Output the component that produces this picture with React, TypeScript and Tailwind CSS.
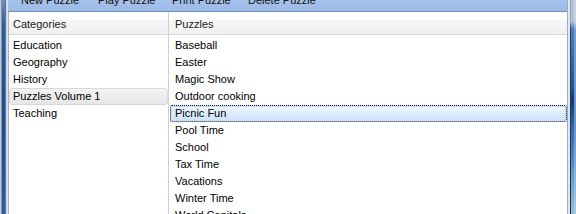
const categories = ["Education", "Geography", "History", "Puzzles Volume 1", "Teaching"];

const puzzles = [
  "Baseball",
  "Easter",
  "Magic Show",
  "Outdoor cooking",
  "Picnic Fun",
  "Pool Time",
  "School",
  "Tax Time",
  "Vacations",
  "Winter Time",
  "World Capitals",
];

const toolbarItems = [
  { label: "New Puzzle", width: "w-[77px]" },
  { label: "Play Puzzle", width: "w-[74px]" },
  { label: "Print Puzzle", width: "w-[76px]" },
  { label: "Delete Puzzle", width: "w-[90px]" },
];

function LeftFrame() {
  return (
    <div className="flex h-full w-[8px] shrink-0">
      <div className="w-px bg-[#c3ccd8]" />
      <div className="w-px bg-[#7d92ad]" />
      <div className="w-[3px] bg-[linear-gradient(to_bottom,#6d8fbd_0%,#2c5c9a_12%,#1f4d8c_60%,#2a5f9c_100%)]" />
      <div className="w-px bg-[#5b7ba3]" />
      <div className="w-px bg-[#c8d2de]" />
      <div className="w-px bg-[#dfe5ec]" />
    </div>
  );
}

function RightFrame() {
  return (
    <div className="flex h-full w-[9px] shrink-0">
      <div className="w-px bg-[#a2acb8]" />
      <div className="w-[2px] bg-[#e2e7ed]" />
      <div className="w-px bg-[linear-gradient(to_bottom,#8ea3bd_0%,#8ea3bd_10%,#143c78_14%,#0c2f66_100%)]" />
      <div className="w-[3px] bg-[linear-gradient(to_bottom,#b3c4d9_0%,#b3c4d9_10%,#4f84bf_13%,#3a6eab_25%,#1f4f92_42%,#0d3777_46%,#2a68ac_58%,#3d84c0_72%,#6ea9cc_86%,#92c2d5_100%)]" />
      <div className="w-[2px] bg-[linear-gradient(to_bottom,#c9d3df_0%,#c9d3df_10%,#7b9cc4_14%,#6e94be_60%,#a9cbd8_100%)]" />
    </div>
  );
}

function ColumnHeader({ label, indent }: { label: string; indent: string }) {
  return (
    <div
      className={`h-[19px] border-b border-[#d5d7da] bg-[linear-gradient(to_bottom,#ffffff_0%,#ffffff_18%,#f5f6f7_24%,#eff0f2_100%)] ${indent} leading-[17px] text-[#1b1b1b]`}
    >
      {label}
    </div>
  );
}

export default function App() {
  return (
    <div className="flex h-[214px] w-[576px] overflow-hidden bg-white font-['Liberation_Sans',Arial,sans-serif] text-[11px] text-black">
      <LeftFrame />

      <div className="flex min-w-0 flex-1 flex-col">
        <div className="h-[12px] shrink-0 overflow-hidden border-b border-[#6f8fbf] bg-[linear-gradient(to_bottom,#a6c1ea_0%,#9dbbe7_100%)]">
          <div className="-mt-[5px] flex pl-[13px] leading-[11px] text-[#111]">
            {toolbarItems.map((item) => (
              <span key={item.label} className={`${item.width} shrink-0 whitespace-nowrap`}>
                {item.label}
              </span>
            ))}
          </div>
        </div>

        <div className="flex min-h-0 flex-1 border-l border-[#aab4c0]">
          <div className="w-[159px] shrink-0 pt-[4px]">
            <ColumnHeader label="Categories" indent="pl-[4px]" />
            <div className="pt-[2px]">
              {categories.map((name) =>
                name === "Puzzles Volume 1" ? (
                  <div
                    key={name}
                    className="h-[17px] rounded-[3px] border border-[#d9d9d9] bg-[linear-gradient(to_bottom,#f3f3f3_0%,#e6e6e6_100%)] pl-[3px] leading-[15px]"
                  >
                    {name}
                  </div>
                ) : (
                  <div key={name} className="h-[17px] pl-[4px] leading-[17px]">
                    {name}
                  </div>
                )
              )}
            </div>
          </div>

          <div className="w-px shrink-0 bg-[#cdd1d6]" />

          <div className="min-w-0 flex-1 pt-[4px]">
            <ColumnHeader label="Puzzles" indent="pl-[6px]" />
            <div className="pt-[2px] pl-px">
              {puzzles.map((name) =>
                name === "Picnic Fun" ? (
                  <div
                    key={name}
                    className="h-[17px] rounded-[2px] border border-dotted border-[#1a1a1a] bg-[linear-gradient(to_bottom,#f2f8ff_0%,#dcebfd_50%,#cfe3fb_100%)] pl-[4px] leading-[15px] shadow-[inset_0_0_0_1px_#c4dcf7]"
                  >
                    {name}
                  </div>
                ) : (
                  <div key={name} className="h-[17px] pl-[5px] leading-[17px]">
                    {name}
                  </div>
                )
              )}
            </div>
          </div>
        </div>
      </div>

      <RightFrame />
    </div>
  );
}
